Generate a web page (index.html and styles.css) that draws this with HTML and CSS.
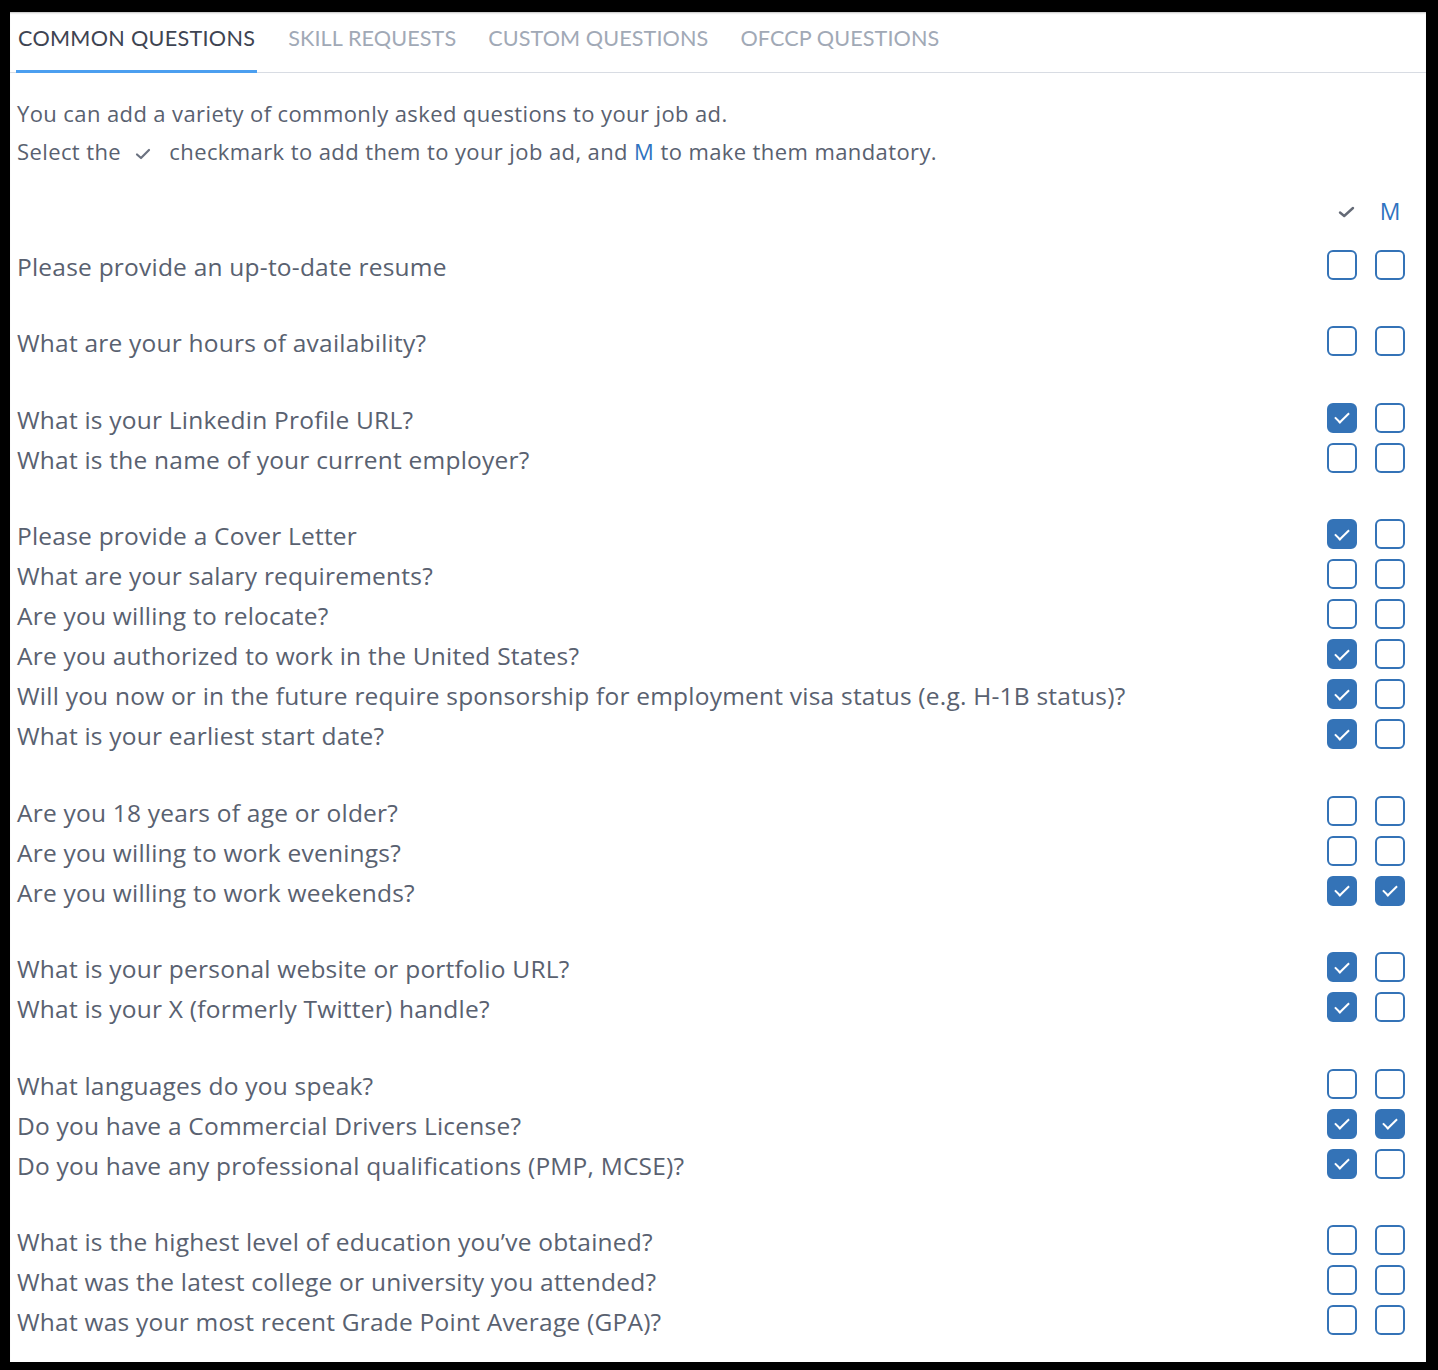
FILE: index.html
```html
<!DOCTYPE html>
<html>
<head>
<meta charset="utf-8">
<link rel="stylesheet" href="styles.css">
</head>
<body>
<div class="panel">
  <nav class="tabs">
    <div class="tab active">COMMON QUESTIONS</div>
    <div class="tab">SKILL REQUESTS</div>
    <div class="tab">CUSTOM QUESTIONS</div>
    <div class="tab">OFCCP QUESTIONS</div>
  </nav>
  <div class="content">
    <p class="intro">You can add a variety of commonly asked questions to your job ad.</p>
    <p class="intro">Select the <svg class="tick-inline" viewBox="0 0 16 12" width="16" height="12"><path d="M2 6.5 L6 10 L14 2" fill="none" stroke="#6b7280" stroke-width="2.2" stroke-linecap="round" stroke-linejoin="round"/></svg> checkmark to add them to your job ad, and <span class="m">M</span> to make them mandatory.</p>

    <div class="head-row">
      <span class="col-h"><svg viewBox="0 0 17 12" width="17" height="12"><path d="M2 6.5 L6.2 10 L15 2" fill="none" stroke="#646a76" stroke-width="2.4" stroke-linecap="round" stroke-linejoin="round"/></svg></span>
      <span class="col-h m">M</span>
    </div>

    <div class="groups">
      <div class="group">
        <div class="row"><span class="q">Please provide an up-to-date resume</span><span class="box"></span><span class="box"></span></div>
      </div>
      <div class="group">
        <div class="row"><span class="q">What are your hours of availability?</span><span class="box"></span><span class="box"></span></div>
      </div>
      <div class="group">
        <div class="row"><span class="q">What is your Linkedin Profile URL?</span><span class="box on"></span><span class="box"></span></div>
        <div class="row"><span class="q">What is the name of your current employer?</span><span class="box"></span><span class="box"></span></div>
      </div>
      <div class="group">
        <div class="row"><span class="q">Please provide a Cover Letter</span><span class="box on"></span><span class="box"></span></div>
        <div class="row"><span class="q">What are your salary requirements?</span><span class="box"></span><span class="box"></span></div>
        <div class="row"><span class="q">Are you willing to relocate?</span><span class="box"></span><span class="box"></span></div>
        <div class="row"><span class="q">Are you authorized to work in the United States?</span><span class="box on"></span><span class="box"></span></div>
        <div class="row"><span class="q">Will you now or in the future require sponsorship for employment visa status (e.g. H-1B status)?</span><span class="box on"></span><span class="box"></span></div>
        <div class="row"><span class="q">What is your earliest start date?</span><span class="box on"></span><span class="box"></span></div>
      </div>
      <div class="group">
        <div class="row"><span class="q">Are you 18 years of age or older?</span><span class="box"></span><span class="box"></span></div>
        <div class="row"><span class="q">Are you willing to work evenings?</span><span class="box"></span><span class="box"></span></div>
        <div class="row"><span class="q">Are you willing to work weekends?</span><span class="box on"></span><span class="box on"></span></div>
      </div>
      <div class="group">
        <div class="row"><span class="q">What is your personal website or portfolio URL?</span><span class="box on"></span><span class="box"></span></div>
        <div class="row"><span class="q">What is your X (formerly Twitter) handle?</span><span class="box on"></span><span class="box"></span></div>
      </div>
      <div class="group">
        <div class="row"><span class="q">What languages do you speak?</span><span class="box"></span><span class="box"></span></div>
        <div class="row"><span class="q">Do you have a Commercial Drivers License?</span><span class="box on"></span><span class="box on"></span></div>
        <div class="row"><span class="q">Do you have any professional qualifications (PMP, MCSE)?</span><span class="box on"></span><span class="box"></span></div>
      </div>
      <div class="group">
        <div class="row"><span class="q">What is the highest level of education you’ve obtained?</span><span class="box"></span><span class="box"></span></div>
        <div class="row"><span class="q">What was the latest college or university you attended?</span><span class="box"></span><span class="box"></span></div>
        <div class="row"><span class="q">What was your most recent Grade Point Average (GPA)?</span><span class="box"></span><span class="box"></span></div>
      </div>
    </div>
  </div>
</div>
</body>
</html>
```

FILE: styles.css
```css
* { box-sizing: border-box; }
html, body { margin: 0; padding: 0; }
body {
  background: #000;
  padding: 12px 12px 8px 10px;
  font-family: "Open Sans", "Noto Sans", sans-serif;
  color: #596170;
}
.panel {
  background: #fff;
  min-height: 1350px;
  box-shadow: inset 0 2px 2px -1px rgba(0,0,0,0.25);
}
.tabs {
  display: flex;
  gap: 29px;
  padding-left: 6px;
  border-bottom: 1px solid #d8dce3;
  font-family: Lato, "Open Sans", sans-serif;
}
.tab {
  font-size: 21.6px;
  line-height: 24px;
  letter-spacing: 0.1px;
  padding: 14px 1px 20px 2px;
  border-bottom: 3px solid transparent;
  margin-bottom: -1px;
  color: #a1a9b6;
}
.tab.active {
  color: #3e4452;
  letter-spacing: 0.3px;
  padding-right: 2px;
  border-bottom-color: #4b9ff0;
}
.content {
  padding: 21px 21px 19px 7px;
}
.intro {
  margin: 0;
  font-size: 22px;
  line-height: 38px;
  letter-spacing: 0.4px;
}
.tick-inline {
  margin: 0 12px 0 8px;
}
.m { color: #2f73c0; }
.head-row {
  display: flex;
  justify-content: flex-end;
  gap: 18px;
  height: 40px;
  margin-top: 21px;
  align-items: center;
}
.col-h {
  width: 30px;
  text-align: center;
  font-size: 23px;
  display: flex;
  justify-content: center;
  align-items: center;
}
.col-h svg { margin-left: 8px; margin-top: 2px; }
.groups {
  display: flex;
  flex-direction: column;
  gap: 36.5px;
  margin-top: 15px;
}
.row {
  display: flex;
  align-items: center;
  height: 40px;
  gap: 18px;
}
.q {
  flex: 1;
  font-size: 24.5px;
  letter-spacing: 0.22px;
}
.box {
  width: 30px;
  height: 30px;
  margin-bottom: 3px;
  border: 2.5px solid #3473b7;
  border-radius: 6px;
  position: relative;
}
.box.on {
  background: #3473b7;
}
.box.on::after {
  content: "";
  position: absolute;
  left: 8.5px;
  top: 4.5px;
  width: 6px;
  height: 12px;
  border-right: 2.8px solid #fff;
  border-bottom: 2.8px solid #fff;
  transform: rotate(45deg);
}
```
